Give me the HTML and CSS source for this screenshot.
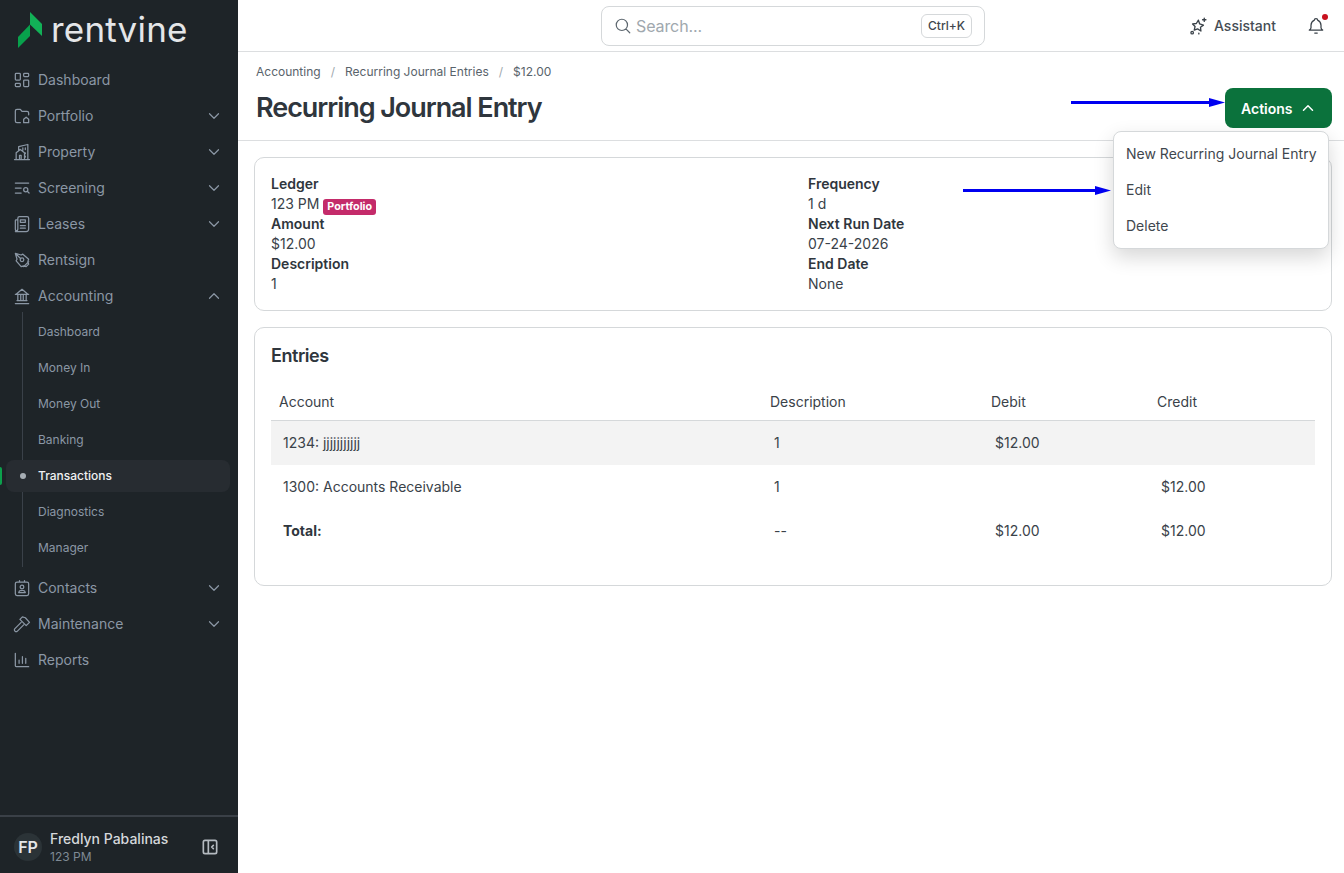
FILE: index.html
```html
<!DOCTYPE html>
<html lang="en">
<head>
    <meta charset="UTF-8">
    <meta name="viewport" content="width=device-width, initial-scale=1.0">
    <title>Recurring Journal Entry</title>
    <link rel="stylesheet" href="styles.css">
</head>
<body>
<div class="app">
    <aside class="sidebar">
        <div class="logo">
            <svg class="logo-mark" viewBox="0 0 24 36">
                <polygon points="12,0 24,12 24,24 12,12.500" fill="#12b157"/>
                <polygon points="0,25 12,12.500 12,24 0,36" fill="#08a14c"/>
            </svg>
            <span class="logo-text">rentvine</span>
        </div>
        <nav class="nav">
            <a class="nav-item">
                <svg class="nav-icon" viewBox="0 0 24 24"><path d="M5 4h4a1 1 0 0 1 1 1v6a1 1 0 0 1 -1 1h-4a1 1 0 0 1 -1 -1v-6a1 1 0 0 1 1 -1M5 16h4a1 1 0 0 1 1 1v2a1 1 0 0 1 -1 1h-4a1 1 0 0 1 -1 -1v-2a1 1 0 0 1 1 -1M15 12h4a1 1 0 0 1 1 1v6a1 1 0 0 1 -1 1h-4a1 1 0 0 1 -1 -1v-6a1 1 0 0 1 1 -1M15 4h4a1 1 0 0 1 1 1v2a1 1 0 0 1 -1 1h-4a1 1 0 0 1 -1 -1v-2a1 1 0 0 1 1 -1"/></svg>
                <span>Dashboard</span>
            </a>
            <a class="nav-item">
                <svg class="nav-icon" viewBox="0 0 24 24"><path d="M10 20h-4a2 2 0 0 1 -2 -2v-12a2 2 0 0 1 2 -2h4l2 2.500h6a2 2 0 0 1 2 2v2M14 20v-4l3 -2.500l3 2.500v4z"/></svg>
                <span>Portfolio</span>
                <svg class="chevron" viewBox="0 0 24 24"><path d="M6 9l6 6l6 -6"/></svg>
            </a>
            <a class="nav-item">
                <svg class="nav-icon" viewBox="0 0 24 24"><path d="M3 21h18M5 21v-8l5 -4l5 4v8M9 21v-5h2v5M8 9.500v-4l11 -2.500v18M13 7v3M16 7v2M16 13v1M16 17v1"/></svg>
                <span>Property</span>
                <svg class="chevron" viewBox="0 0 24 24"><path d="M6 9l6 6l6 -6"/></svg>
            </a>
            <a class="nav-item">
                <svg class="nav-icon" viewBox="0 0 24 24"><path d="M4 6h16M4 12h7M4 18h7M16.500 11.500a2.500 2.500 0 1 0 0 5a2.500 2.500 0 0 0 0 -5M18.500 16l2 2"/></svg>
                <span>Screening</span>
                <svg class="chevron" viewBox="0 0 24 24"><path d="M6 9l6 6l6 -6"/></svg>
            </a>
            <a class="nav-item">
                <svg class="nav-icon" viewBox="0 0 24 24"><path d="M7 7h-2a1 1 0 0 0 -1 1v10a3 3 0 0 0 3 3h10a3 3 0 0 0 3 -3v-13a2 2 0 0 0 -2 -2h-9a2 2 0 0 0 -2 2v13a3 3 0 0 1 -3 3M10 7h6v3h-6zM10 14h6M10 17h6"/></svg>
                <span>Leases</span>
                <svg class="chevron" viewBox="0 0 24 24"><path d="M6 9l6 6l6 -6"/></svg>
            </a>
            <a class="nav-item">
                <svg class="nav-icon" viewBox="0 0 24 24"><path d="M4 4l2 7l-1 2l6 7l3 -1l3 1l3 -3l-1 -3l1 -3l-7 -6l-2 1zM4 4l6.500 6.500M12 9.500a2.200 2.200 0 1 0 0 4.400a2.200 2.200 0 0 0 0 -4.400M14 20l6 -6"/></svg>
                <span>Rentsign</span>
            </a>
            <a class="nav-item">
                <svg class="nav-icon" viewBox="0 0 24 24"><path d="M4 21h16M4 10h16M5 10l7 -6l7 6M6 17.500h12M7 10.500v7M10.500 10.500v7M13.500 10.500v7M17 10.500v7"/></svg>
                <span>Accounting</span>
                <svg class="chevron" viewBox="0 0 24 24"><path d="M6 15l6 -6l6 6"/></svg>
            </a>
            <div class="subnav">
                <a class="sub-item">Dashboard</a>
                <a class="sub-item">Money In</a>
                <a class="sub-item">Money Out</a>
                <a class="sub-item">Banking</a>
                <a class="sub-item active">Transactions</a>
                <a class="sub-item">Diagnostics</a>
                <a class="sub-item">Manager</a>
            </div>
            <a class="nav-item">
                <svg class="nav-icon" viewBox="0 0 24 24"><path d="M6 5h12a2 2 0 0 1 2 2v12a2 2 0 0 1 -2 2h-12a2 2 0 0 1 -2 -2v-12a2 2 0 0 1 2 -2M9 3v2M15 3v2M12 8.500a2.200 2.200 0 1 0 0 4.400a2.200 2.200 0 0 0 0 -4.400M8 17.500h8a3 3 0 0 0 -3 -2.500h-2a3 3 0 0 0 -3 2.500"/></svg>
                <span>Contacts</span>
                <svg class="chevron" viewBox="0 0 24 24"><path d="M6 9l6 6l6 -6"/></svg>
            </a>
            <a class="nav-item">
                <svg class="nav-icon" viewBox="0 0 24 24"><path d="M11 10l-7.500 7.500a2 2 0 0 0 3 3l7.500 -7.500M9.500 6.500l3 -3l3.500 1l5 5.500l-4 4l-6 -6l-1.500 -1.500"/></svg>
                <span>Maintenance</span>
                <svg class="chevron" viewBox="0 0 24 24"><path d="M6 9l6 6l6 -6"/></svg>
            </a>
            <a class="nav-item">
                <svg class="nav-icon" viewBox="0 0 24 24"><path d="M4 4v15a1 1 0 0 0 1 1h15M8.500 16v-4M12.500 16v-8M16.500 16v-6"/></svg>
                <span>Reports</span>
            </a>
        </nav>
        <div class="user">
            <div class="avatar">FP</div>
            <div class="user-info">
                <div class="user-name">Fredlyn Pabalinas</div>
                <div class="user-org">123 PM</div>
            </div>
            <svg class="collapse" viewBox="0 0 24 24"><path d="M6 4h12a2 2 0 0 1 2 2v12a2 2 0 0 1 -2 2h-12a2 2 0 0 1 -2 -2v-12a2 2 0 0 1 2 -2M10 4v16M16 10l-2 2l2 2"/></svg>
        </div>
    </aside>

    <div class="main">
        <header class="topbar">
            <div></div>
            <div class="search">
                <svg class="search-icon" viewBox="0 0 24 24"><path d="M10.500 3a7.500 7.500 0 1 0 0 15a7.500 7.500 0 0 0 0 -15M21 21l-5.200 -5.200"/></svg>
                <span class="search-text">Search...</span>
                <span class="kbd">Ctrl+K</span>
            </div>
            <div class="topbar-right">
                <div class="assistant">
                    <svg class="assistant-icon" viewBox="0 0 24 24"><path d="M12.500 5l1.500 4.500l4.500 1.500l-3.500 2.500l.5 4.500l-4 -2.500l-4 1.500l1 -4.500l-3 -3l4.500 -.5zM19.500 2.500v4M17.500 4.500h4M5 18.500a1.500 1.500 0 1 0 0 3a1.500 1.500 0 0 0 0 -3M13 20.500v1"/></svg>
                    <span>Assistant</span>
                </div>
                <div class="bell">
                    <svg viewBox="0 0 24 24"><path d="M10 5a2 2 0 1 1 4 0a7 7 0 0 1 4 6v3a4 4 0 0 0 2 3h-16a4 4 0 0 0 2 -3v-3a7 7 0 0 1 4 -6M10.500 20.500h3"/></svg>
                    <span class="dot"></span>
                </div>
            </div>
        </header>

        <div class="page-head">
            <div>
                <div class="crumbs">
                    <span>Accounting</span><i>/</i><span>Recurring Journal Entries</span><i>/</i><span>$12.00</span>
                </div>
                <h1>Recurring Journal Entry</h1>
            </div>
            <button class="actions">
                Actions
                <svg viewBox="0 0 24 24"><path d="M6 15l6 -6l6 6"/></svg>
            </button>
        </div>

        <div class="content">
            <section class="card details">
                <div>
                    <div class="label">Ledger</div>
                    <div class="value">123 PM <span class="badge">Portfolio</span></div>
                    <div class="label">Amount</div>
                    <div class="value">$12.00</div>
                    <div class="label">Description</div>
                    <div class="value">1</div>
                </div>
                <div>
                    <div class="label">Frequency</div>
                    <div class="value">1 d</div>
                    <div class="label">Next Run Date</div>
                    <div class="value">07-24-2026</div>
                    <div class="label">End Date</div>
                    <div class="value">None</div>
                </div>
            </section>

            <section class="card entries">
                <h2>Entries</h2>
                <table>
                    <thead>
                        <tr>
                            <th class="col-account">Account</th>
                            <th class="col-desc">Description</th>
                            <th class="col-money">Debit</th>
                            <th class="col-money">Credit</th>
                        </tr>
                    </thead>
                    <tbody>
                        <tr class="shaded">
                            <td>1234: jjjjjjjjjjj</td>
                            <td>1</td>
                            <td>$12.00</td>
                            <td></td>
                        </tr>
                        <tr>
                            <td>1300: Accounts Receivable</td>
                            <td>1</td>
                            <td></td>
                            <td>$12.00</td>
                        </tr>
                        <tr>
                            <td><b>Total:</b></td>
                            <td>--</td>
                            <td>$12.00</td>
                            <td>$12.00</td>
                        </tr>
                    </tbody>
                </table>
            </section>
        </div>
    </div>
</div>

<!-- menu and the blue annotation arrows sit on top of the page -->
<div class="menu">
    <a>New Recurring Journal Entry</a>
    <a>Edit</a>
    <a>Delete</a>
</div>
<svg class="arrow arrow-actions" viewBox="0 0 154 9"><path d="M0 4.500H140" stroke="#0000f0" stroke-width="3"/><polygon points="138,0 154,4.500 138,9" fill="#0000f0"/></svg>
<svg class="arrow arrow-edit" viewBox="0 0 148 9"><path d="M0 4.500H134" stroke="#0000f0" stroke-width="3"/><polygon points="132,0 148,4.500 132,9" fill="#0000f0"/></svg>
</body>
</html>
```

FILE: styles.css
```css
* {
    box-sizing: border-box;
}

body {
    margin: 0;
    font-family: Inter, "Liberation Sans", sans-serif;
    font-size: 14px;
    line-height: 20px;
    color: #2f363d;
    background-color: #ffffff;
    overflow: hidden;
}

.app {
    display: flex;
    width: 1344px;
    height: 873px;
}

/* Sidebar */
.sidebar {
    width: 238px;
    flex-shrink: 0;
    display: flex;
    flex-direction: column;
    background-color: #1e2428;
    color: #8b97a5;
}

.logo {
    height: 62px;
    display: flex;
    align-items: flex-start;
    gap: 9px;
    padding: 12px 0 0 18px;
}

.logo-mark {
    width: 24px;
    height: 36px;
}

.logo-text {
    margin-top: -1px;
    font-size: 35px;
    line-height: 37px;
    font-weight: 400;
    color: #e4e6e8;
    letter-spacing: 0.2px;
}

.nav {
    flex: 1;
}

.nav-item {
    height: 36px;
    display: flex;
    align-items: center;
    padding: 0 15px 0 12px;
    gap: 6px;
}

.nav-item span {
    flex: 1;
}

.nav-icon {
    width: 20px;
    height: 20px;
    fill: none;
    stroke: #8b97a5;
    stroke-width: 1.5;
    stroke-linecap: round;
    stroke-linejoin: round;
}

.chevron {
    width: 18px;
    height: 18px;
    fill: none;
    stroke: #8b97a5;
    stroke-width: 1.6;
    stroke-linecap: round;
    stroke-linejoin: round;
}

.subnav {
    position: relative;
    margin-bottom: 4px;
}

/* vertical guide line */
.subnav::before {
    content: "";
    position: absolute;
    left: 22px;
    top: -2px;
    bottom: -1px;
    width: 1px;
    background-color: #3a4149;
}

.sub-item {
    display: flex;
    align-items: center;
    height: 36px;
    padding-left: 38px;
    font-size: 12px;
}

.sub-item.active {
    position: relative;
    height: 32px;
    margin: 2px 8px 2px 6px;
    padding-left: 32px;
    background-color: #272c31;
    border-radius: 8px;
    color: #f0f1f2;
    font-weight: 500;
}

.sub-item.active::before {
    content: "";
    position: absolute;
    left: 14px;
    top: 13px;
    width: 6px;
    height: 6px;
    border-radius: 50%;
    background-color: #a6adb4;
}

.sub-item.active::after {
    content: "";
    position: absolute;
    left: -6px;
    top: 7px;
    width: 2px;
    height: 18px;
    border-radius: 0 2px 2px 0;
    background-color: #0ca04c;
}

.user {
    height: 58px;
    display: flex;
    align-items: center;
    gap: 8px;
    padding: 4px 18px 0 14px;
    border-top: 2px solid #3a4047;
}

.avatar {
    width: 28px;
    height: 28px;
    border-radius: 50%;
    background-color: #2b3337;
    color: #e4e6e8;
    font-weight: 600;
    font-size: 16px;
    display: flex;
    align-items: center;
    justify-content: center;
}

.user-info {
    flex: 1;
}

.user-name {
    color: #d5d8db;
    font-weight: 500;
    line-height: 18px;
}

.user-org {
    margin-top: 1px;
    font-size: 12px;
    line-height: 16px;
    color: #7f8a95;
}

.collapse {
    width: 20px;
    height: 20px;
    fill: none;
    stroke: #b4bac0;
    stroke-width: 2;
    stroke-linecap: round;
    stroke-linejoin: round;
}

/* Main */
.main {
    flex: 1;
    min-width: 0;
}

.topbar {
    height: 52px;
    display: grid;
    grid-template-columns: 1fr 384px 1fr;
    align-items: center;
    padding-left: 4px;
    padding-top: 1px;
    border-bottom: 1px solid #dcdee0;
}

.search {
    height: 40px;
    display: flex;
    align-items: center;
    gap: 4px;
    padding: 0 12px 0 12px;
    border: 1px solid #d5d8da;
    border-radius: 8px;
}

.search-icon {
    width: 18px;
    height: 18px;
    fill: none;
    stroke: #5c666e;
    stroke-width: 1.6;
    stroke-linecap: round;
}

.search-text {
    flex: 1;
    font-size: 16px;
    letter-spacing: -0.1px;
    color: #a0a8ae;
}

.kbd {
    height: 24px;
    padding: 0 6px;
    display: flex;
    align-items: center;
    font-size: 12px;
    font-weight: 500;
    color: #3f474e;
    border: 1px solid #d5d8da;
    border-radius: 6px;
}

.topbar-right {
    display: flex;
    justify-content: flex-end;
    align-items: center;
    gap: 30px;
    padding-right: 18px;
}

.assistant {
    display: flex;
    align-items: center;
    gap: 6px;
    font-weight: 500;
    color: #454d54;
}

.assistant-icon {
    width: 20px;
    height: 20px;
    fill: none;
    stroke: #3a4249;
    stroke-width: 1.6;
    stroke-linejoin: round;
    stroke-linecap: round;
}

.bell {
    position: relative;
    width: 20px;
    height: 20px;
}

.bell svg {
    display: block;
    width: 20px;
    height: 20px;
    fill: none;
    stroke: #3a4249;
    stroke-width: 1.5;
    stroke-linejoin: round;
    stroke-linecap: round;
}

.dot {
    position: absolute;
    right: -2px;
    top: -2px;
    width: 6px;
    height: 6px;
    border-radius: 50%;
    background-color: #c8101e;
}

.page-head {
    height: 89px;
    display: flex;
    justify-content: space-between;
    align-items: flex-start;
    padding: 10px 12px 0 18px;
    border-bottom: 1px solid #dcdee0;
}

.crumbs {
    font-size: 12px;
    color: #59636b;
    display: flex;
    align-items: center;
}

.crumbs i {
    font-style: normal;
    margin: 0 10px;
    color: #a0a8ae;
}

h1 {
    margin: 8px 0 0;
    font-size: 27px;
    line-height: 36px;
    font-weight: 600;
    letter-spacing: -1.05px;
    color: #2f363d;
}

.actions {
    margin-top: 26px;
    width: 107px;
    height: 40px;
    display: flex;
    align-items: center;
    gap: 6px;
    padding: 0 0 0 16px;
    border: none;
    border-radius: 8px;
    background-color: #0b723c;
    color: #ffffff;
    font-family: inherit;
    font-size: 14px;
    font-weight: 600;
}

.actions svg {
    width: 18px;
    height: 18px;
    fill: none;
    stroke: #ffffff;
    stroke-width: 2;
    stroke-linecap: round;
    stroke-linejoin: round;
}

.content {
    padding: 16px 12px 0 16px;
    display: flex;
    flex-direction: column;
    gap: 16px;
}

.card {
    border: 1px solid #d5d8da;
    border-radius: 10px;
    padding: 16px;
}

.details {
    display: grid;
    grid-template-columns: 537px 1fr;
}

.label {
    height: 20px;
    font-weight: 600;
}

.value {
    height: 20px;
    color: #3a4249;
}

.badge {
    display: inline-block;
    padding: 0 4px;
    height: 16px;
    line-height: 16px;
    font-size: 10.750px;
    font-weight: 700;
    color: #ffffff;
    background-color: #c42b6a;
    border-radius: 3px;
    vertical-align: -1px;
}

.entries {
    height: 259px;
}

h2 {
    margin: 0 0 16px;
    font-size: 18px;
    line-height: 24px;
    font-weight: 600;
    letter-spacing: -0.45px;
}

table {
    width: 100%;
    border-collapse: separate;
    border-spacing: 0;
    table-layout: fixed;
}

th {
    height: 37px;
    padding: 0 0 0 8px;
    text-align: left;
    font-weight: 400;
    color: #3a4249;
    border-bottom: 1px solid #d5d8da;
}

td {
    height: 44px;
    padding: 0 0 0 12px;
    color: #3a4249;
}

td b {
    color: #2f363d;
}

.col-account {
    width: 491px;
}

.col-desc {
    width: 221px;
}

.col-money {
    width: 166px;
}

.shaded td {
    background-color: #f3f3f3;
}

.menu {
    position: absolute;
    left: 1113px;
    top: 131px;
    width: 216px;
    padding: 4px 0;
    background-color: #ffffff;
    border: 1px solid #d5d8da;
    border-radius: 8px;
    box-shadow: 0 8px 20px rgba(0, 0, 0, 0.16);
    color: #3f474e;
}

.menu a {
    display: flex;
    align-items: center;
    height: 36px;
    padding-left: 12px;
    white-space: nowrap;
}

.arrow {
    position: absolute;
    height: 9px;
}

.arrow-actions {
    left: 1071px;
    top: 98px;
    width: 154px;
}

.arrow-edit {
    left: 963px;
    top: 186px;
    width: 148px;
}
```
